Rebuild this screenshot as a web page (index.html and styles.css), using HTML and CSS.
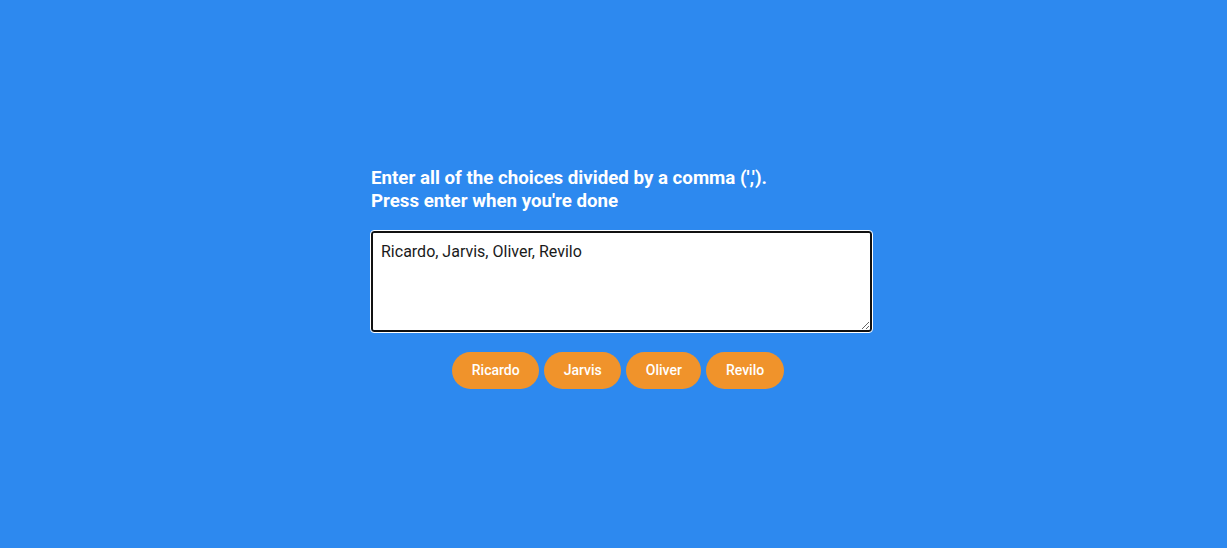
FILE: index.html
```html
<!DOCTYPE html>
<html>
<head>
<meta charset="utf-8">
<link rel="stylesheet" href="styles.css">
</head>
<body>
<div class="page">
  <main class="panel">
    <h1 class="title">Enter all of the choices divided by a comma (',').<br>Press enter when you're done</h1>
    <textarea class="input">Ricardo, Jarvis, Oliver, Revilo</textarea>
    <div class="choices">
      <span class="chip">Ricardo</span>
      <span class="chip">Jarvis</span>
      <span class="chip">Oliver</span>
      <span class="chip">Revilo</span>
    </div>
  </main>
</div>
</body>
</html>
```

FILE: styles.css
```css
html, body {
  margin: 0;
  height: 100%;
  background: #2d89ef;
}
body {
  font-family: Roboto, "Liberation Sans", sans-serif;
}
.page {
  display: flex;
  justify-content: center;
  padding-left: 16px;
  padding-top: 167px;
}
.panel {
  width: 501px;
  display: flex;
  flex-direction: column;
}
.title {
  margin: 0;
  font-size: 18.72px;
  line-height: 23px;
  font-weight: 700;
  color: #ffffff;
}
.input {
  margin-top: 18px;
  width: 501px;
  height: 101px;
  box-sizing: border-box;
  padding: 9px 8px 5px;
  border: 2px solid #111111;
  border-radius: 3px;
  outline: 1px solid #ffffff;
  font-family: Roboto, "Liberation Sans", sans-serif;
  font-size: 16px;
  color: #1a1a1a;
  background: #ffffff;
  resize: vertical;
}
.choices {
  margin-top: 20px;
  display: flex;
  justify-content: center;
  padding-left: 5px;
  margin-left: -7px;
}
.chip {
  height: 37px;
  padding: 0 19.5px 1px;
  box-sizing: border-box;
  margin-right: 5px;
  border-radius: 19px;
  background: #f0932b;
  color: #ffffff;
  font-size: 14px;
  font-weight: 500;
  display: flex;
  align-items: center;
}
```
